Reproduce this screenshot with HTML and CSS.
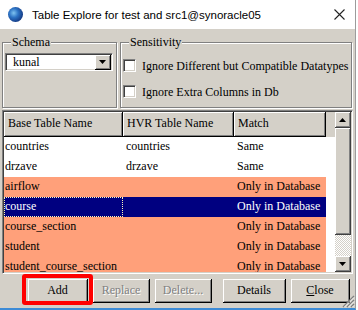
FILE: index.html
```html
<!DOCTYPE html>
<html lang="en">
<head>
  <meta charset="UTF-8" />
  <title>Table Explore</title>
  <link rel="stylesheet" href="styles.css">
</head>
<body>
  <div class="window">
    <div class="titlebar">
      <span class="app-icon"></span>
      <span class="title">Table Explore for test and src1@synoracle05</span>
      <svg class="close-x" width="11" height="11" viewBox="0 0 11 11">
        <path d="M0.5 0.5 L10.5 10.5 M10.5 0.5 L0.5 10.5" stroke="#222" stroke-width="1.1" fill="none"/>
      </svg>
    </div>

    <div class="content">
      <div class="options">
        <fieldset class="group schema">
          <legend>Schema</legend>
          <div class="combo">
            <span class="combo-value">kunal</span>
            <span class="combo-btn">
              <svg width="7" height="4" viewBox="0 0 7 4"><path d="M0 0 H7 L3.5 4 Z" fill="#000"/></svg>
            </span>
          </div>
        </fieldset>
        <fieldset class="group sensitivity">
          <legend>Sensitivity</legend>
          <label class="check"><span class="box"></span>Ignore Different but Compatible Datatypes</label>
          <label class="check"><span class="box"></span>Ignore Extra Columns in Db</label>
        </fieldset>
      </div>

      <div class="grid-frame">
        <div class="viewport">
          <div class="head">
            <div class="hcell">Base Table Name</div>
            <div class="hcell">HVR Table Name</div>
            <div class="hcell">Match</div>
          </div>
          <div class="row">
            <div class="cell">countries</div>
            <div class="cell">countries</div>
            <div class="cell">Same</div>
          </div>
          <div class="row">
            <div class="cell">drzave</div>
            <div class="cell">drzave</div>
            <div class="cell">Same</div>
          </div>
          <div class="row diff">
            <div class="cell">airflow</div>
            <div class="cell"></div>
            <div class="cell">Only in Database</div>
          </div>
          <div class="row selected">
            <div class="cell focus">course</div>
            <div class="cell"></div>
            <div class="cell">Only in Database</div>
          </div>
          <div class="row diff">
            <div class="cell">course_section</div>
            <div class="cell"></div>
            <div class="cell">Only in Database</div>
          </div>
          <div class="row diff">
            <div class="cell">student</div>
            <div class="cell"></div>
            <div class="cell">Only in Database</div>
          </div>
          <div class="row diff">
            <div class="cell">student_course_section</div>
            <div class="cell"></div>
            <div class="cell">Only in Database</div>
          </div>
        </div>
        <div class="scrollbar">
          <div class="sb-btn">
            <svg width="7" height="4" viewBox="0 0 7 4"><path d="M0 4 H7 L3.5 0 Z" fill="#000"/></svg>
          </div>
          <div class="sb-thumb"></div>
          <div class="sb-track"></div>
          <div class="sb-btn">
            <svg width="7" height="4" viewBox="0 0 7 4"><path d="M0 0 H7 L3.5 4 Z" fill="#000"/></svg>
          </div>
        </div>
      </div>

      <div class="buttons">
        <div class="marked">
          <button type="button" class="btn btn-add">Add</button>
          <span class="highlight"></span>
        </div>
        <button type="button" class="btn btn-replace" disabled>Replace</button>
        <button type="button" class="btn btn-delete" disabled>Delete...</button>
        <button type="button" class="btn btn-details">Details</button>
        <button type="button" class="btn btn-close"><u>C</u>lose</button>
      </div>
    </div>

    <svg class="grip" width="13" height="13" viewBox="0 0 13 13">
      <path d="M12 1 L1 12 M12 5 L5 12 M12 9 L9 12" stroke="#808080" stroke-width="1.4" fill="none"/>
      <path d="M12 2.5 L2.5 12 M12 6.5 L6.5 12 M12 10.5 L10.5 12" stroke="#fff" stroke-width="0.8" fill="none"/>
    </svg>
  </div>
</body>
</html>
```

FILE: styles.css
```css
* {
  box-sizing: border-box;
}

body {
  margin: 0;
  width: 358px;
  height: 310px;
  overflow: hidden;
  background: #fff;
  font-family: "Liberation Serif", "Times New Roman", serif;
  font-size: 12px;
  color: #000;
}

.window {
  position: relative;
  width: 356px;
  height: 310px;
  display: flex;
  flex-direction: column;
  background: #d4d0c8;
  border-right: 1px solid #9c9c9c;
  border-bottom: 2px solid #3d8bd6;
}

/* title bar */
.titlebar {
  height: 29px;
  flex: none;
  display: flex;
  align-items: center;
  padding-left: 8px;
  background: #fff;
  font-family: "Liberation Sans", Arial, sans-serif;
  font-size: 11.5px;
  color: #000;
}

.app-icon {
  width: 15px;
  height: 15px;
  margin-right: 9px;
  border-radius: 50%;
  background: radial-gradient(circle at 38% 40%, #7fc3f0 0, #2d73c4 35%, #163f8a 70%, #0b2458 100%);
}

.title {
  flex: 1;
}

.close-x {
  margin-right: 10px;
}

.content {
  flex: 1;
  display: flex;
  flex-direction: column;
  padding: 6px 2px 0 2px;
}

/* option groups */
.options {
  display: flex;
  gap: 3px;
}

.group {
  margin: 0;
  height: 73px;
  min-inline-size: 0;
  padding: 4px 2px 0;
  border: 1px solid #808080;
  box-shadow: inset 1px 1px #fff, 1px 1px #fff;
}

.group legend {
  margin-left: 6px;
  padding: 0 1px;
  line-height: 14px;
  background: #d4d0c8;
}

.schema {
  width: 115px;
}

.sensitivity {
  width: 232px;
  padding-top: 10px;
  display: flex;
  flex-direction: column;
  gap: 13px;
}

.combo {
  width: 108px;
  height: 18px;
  display: flex;
  align-items: center;
  padding: 2px 1px 2px 2px;
  background: #fff;
  border: 1px solid;
  border-color: #808080 #fff #fff #808080;
  box-shadow: inset 1px 1px #404040, inset -1px -1px #d4d0c8;
}

.combo-value {
  flex: 1;
  padding-left: 5px;
  line-height: 14px;
}

.combo-btn {
  width: 16px;
  height: 15px;
  display: flex;
  align-items: center;
  justify-content: center;
  background: #d4d0c8;
  border-right: 1px solid #000;
  border-bottom: 1px solid #000;
  box-shadow: inset 1px 1px #fff, inset -1px -1px #808080;
}

.check {
  display: flex;
  align-items: center;
  gap: 6px;
  height: 13px;
  line-height: 14px;
  white-space: nowrap;
}

.box {
  width: 13px;
  height: 13px;
  flex: none;
  background: #fff;
  border: 1px solid;
  border-color: #808080 #fff #fff #808080;
  box-shadow: inset 1px 1px #404040, inset -1px -1px #d4d0c8;
}

/* table */
.grid-frame {
  margin-top: 2px;
  height: 164px;
  display: flex;
  padding: 1px;
  border: 1px solid;
  border-color: #808080 #fff #fff #808080;
  box-shadow: inset 1px 1px #404040, inset -1px -1px #d4d0c8;
}

.viewport {
  flex: 1;
  overflow: hidden;
  background: #fff;
}

.head {
  display: grid;
  grid-template-columns: 119px 111px 92px;
  height: 25px;
  background: #d4d0c8;
}

.hcell {
  padding-left: 4px;
  line-height: 23px;
  border-right: 1px solid #000;
  border-bottom: 1px solid #000;
  box-shadow: inset 1px 1px #fff, inset -1px -1px #808080;
  white-space: nowrap;
  overflow: hidden;
}

.row {
  display: grid;
  grid-template-columns: 119px 111px 92px;
  width: 322px;
  height: 20px;
}

.cell {
  padding-left: 3px;
  line-height: 18px;
  white-space: nowrap;
  overflow: hidden;
}

.cell:first-child {
  padding-left: 1px;
}

.row.diff {
  background: #ffa07a;
}

.row.selected {
  background: #000080;
  color: #fff;
}

.cell.focus {
  padding-left: 0;
  line-height: 16px;
  border: 1px dotted #fff6b8;
}

/* scrollbar */
.scrollbar {
  width: 16px;
  display: flex;
  flex-direction: column;
}

.sb-btn,
.sb-thumb {
  background: #d4d0c8;
  border-right: 1px solid #404040;
  border-bottom: 1px solid #404040;
  box-shadow: inset 1px 1px #fff, inset -1px -1px #808080;
}

.sb-btn {
  height: 16px;
  display: flex;
  align-items: center;
  justify-content: center;
}

.sb-thumb {
  height: 107px;
}

.sb-track {
  flex: 1;
  background: repeating-conic-gradient(#fff 0 25%, #d4d0c8 0 50%) 0 0 / 2px 2px;
}

/* buttons */
.buttons {
  margin-top: 5px;
  display: flex;
  gap: 5px;
  padding-left: 26px;
}

.marked {
  position: relative;
}

.btn {
  height: 24px;
  padding: 0;
  font-family: inherit;
  font-size: 12px;
  color: #000;
  background: #d4d0c8;
  border: none;
  border-right: 1px solid #000;
  border-bottom: 1px solid #000;
  box-shadow: inset 1px 1px #fff, inset -1px -1px #808080;
}

.btn:disabled {
  color: #808080;
  text-shadow: 1px 1px #fff;
}

.btn-add { width: 60px; }
.btn-replace { width: 57px; }
.btn-delete { width: 57px; }
.btn-details { width: 63px; margin-left: 6px; }
.btn-close { width: 59px; }

.highlight {
  position: absolute;
  top: -5px;
  left: -6px;
  right: -5px;
  bottom: -2px;
  border: 4px solid #f00;
  border-radius: 3px;
}

.grip {
  position: absolute;
  right: 0;
  bottom: 0;
}
```
